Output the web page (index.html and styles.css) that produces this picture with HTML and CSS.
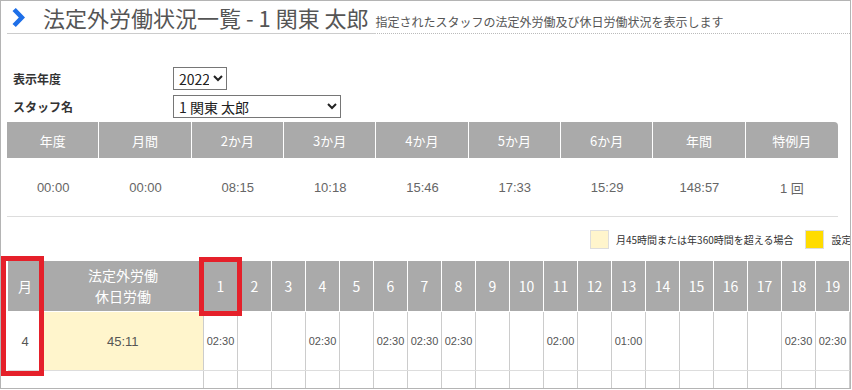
FILE: index.html
```html
<!DOCTYPE html>
<html lang="ja">
  <head>
    <meta charset="UTF-8" />
    <meta name="viewport" content="width=device-width, initial-scale=1.0" />
    <title>法定外労働状況一覧</title>
    <link rel="stylesheet" href="styles.css">
  </head>
  <body>
    <div class="frame">
      <div class="page-head">
        <h1 class="page-title">
          <svg class="chevron" width="13" height="19" viewBox="0 0 13 19" xmlns="http://www.w3.org/2000/svg">
            <polygon points="0.5,3 3.8,0 13,9.5 3.8,19 0.5,16 6.8,9.5" fill="#1e6fe8" />
          </svg>
          法定外労働状況一覧 - 1 関東 太郎
        </h1>
        <span class="page-desc">指定されたスタッフの法定外労働及び休日労働状況を表示します</span>
      </div>

      <div class="filters">
        <div class="filter-row">
          <label class="filter-label">表示年度</label>
          <select class="year-select">
            <option>2022</option>
            <option>2021</option>
          </select>
        </div>
        <div class="filter-row">
          <label class="filter-label">スタッフ名</label>
          <select class="staff-select">
            <option>1 関東 太郎</option>
          </select>
        </div>
      </div>

      <table class="summary">
        <thead>
          <tr>
            <th>年度</th>
            <th>月間</th>
            <th>2か月</th>
            <th>3か月</th>
            <th>4か月</th>
            <th>5か月</th>
            <th>6か月</th>
            <th>年間</th>
            <th>特例月</th>
          </tr>
        </thead>
        <tbody>
          <tr>
            <td>00:00</td>
            <td>00:00</td>
            <td>08:15</td>
            <td>10:18</td>
            <td>15:46</td>
            <td>17:33</td>
            <td>15:29</td>
            <td>148:57</td>
            <td>1 回</td>
          </tr>
        </tbody>
      </table>

      <div class="legend">
        <div class="legend-item">
          <span class="legend-box over"></span>
          <span>月45時間または年360時間を超える場合</span>
        </div>
        <div class="legend-item">
          <span class="legend-box limit"></span>
          <span>設定時間を超える場合</span>
        </div>
      </div>

      <table class="monthly">
        <thead>
          <tr id="day-head">
            <th class="head-month">月</th>
            <th class="head-total">法定外労働<br>休日労働</th>
          </tr>
        </thead>
        <tbody id="month-rows"></tbody>
      </table>

      <div class="mark mark-month"></div>
      <div class="mark mark-day"></div>
    </div>

    <script>
      const head = document.getElementById('day-head');
      const body = document.getElementById('month-rows');
      const rows = [
        {
          month: 4,
          total: '45:11',
          over: true,
          days: { 1: '02:30', 4: '02:30', 6: '02:30', 7: '02:30', 8: '02:30', 11: '02:00', 13: '01:00', 18: '02:30', 19: '02:30', 20: '02:30', 21: '02:30', 22: '02:30', 25: '03:00', 26: '02:30', 27: '02:41', 28: '02:30', 29: '03:30' }
        },
        {
          month: 5,
          total: '23:40',
          over: false,
          days: { 2: '02:30', 6: '02:00', 9: '01:30', 12: '02:30', 16: '02:30', 20: '02:30', 23: '03:40', 26: '02:30', 30: '03:30' }
        }
      ];
      // 日付ヘッダー
      for (let d = 1; d <= 31; d++) {
        const th = document.createElement('th');
        th.className = 'day';
        th.textContent = d;
        head.appendChild(th);
      }
      rows.forEach((row) => {
        const tr = document.createElement('tr');
        tr.innerHTML =
          '<td class="cell-month">' + row.month + '</td>' +
          '<td class="cell-total' + (row.over ? ' over' : '') + '">' + row.total + '</td>';
        for (let d = 1; d <= 31; d++) {
          const td = document.createElement('td');
          td.className = 'cell-day';
          td.textContent = row.days[d] || '';
          tr.appendChild(td);
        }
        body.appendChild(tr);
      });
    </script>
  </body>
</html>
```

FILE: styles.css
```css
body {
  margin: 0;
  font-family: "Noto Sans CJK JP", sans-serif;
  color: #333;
}
.frame {
  position: relative;
  width: 851px;
  height: 389px;
  box-sizing: border-box;
  border: 1px solid #b4b4b4;
  padding-left: 6px;
  overflow: hidden;
  background: #fff;
}

.page-head {
  display: flex;
  align-items: baseline;
  border-bottom: 1px dotted #bbb;
  white-space: nowrap;
}
.page-title {
  display: flex;
  align-items: center;
  gap: 18px;
  margin: 0 0 -1px;
  padding: 0 7px 0 5px;
  font-size: 22px;
  font-weight: normal;
  line-height: 32px;
  color: #555;
  border-bottom: 1px solid #ccc;
}
.chevron {
  flex: none;
}
.page-desc {
  font-size: 12px;
  color: #555;
}

.filters {
  margin-top: 33px;
  display: flex;
  flex-direction: column;
  gap: 5px;
}
.filter-row {
  display: flex;
  align-items: center;
  height: 23px;
}
.filter-label {
  width: 160px;
  padding-left: 6px;
  font-size: 12px;
  font-weight: bold;
  color: #333;
}
.year-select,
.staff-select {
  height: 23px;
  border: 1px solid #767676;
  border-radius: 0;
  background: #fff;
  font-family: "Noto Sans CJK JP", sans-serif;
  font-size: 14px;
  color: #222;
  padding: 0 1px;
}
.year-select {
  width: 54px;
}
.staff-select {
  width: 168px;
}

.summary {
  margin-top: 4px;
  width: 831px;
  table-layout: fixed;
  border-collapse: separate;
  border-spacing: 0;
}
.summary th {
  height: 36px;
  padding: 0;
  background: #aaa;
  color: #fff;
  font-size: 13px;
  font-weight: normal;
  border-right: 1px solid #fff;
}
.summary th:last-child {
  border-right: none;
  border-top-right-radius: 4px;
}
.summary td {
  height: 58px;
  padding: 0;
  text-align: center;
  font-family: "Liberation Sans", "Noto Sans CJK JP", sans-serif;
  font-size: 13px;
  color: #666;
  border-bottom: 1px solid #ddd;
}

.legend {
  display: flex;
  align-items: center;
  gap: 12px;
  margin-top: 13px;
  padding-left: 583px;
  white-space: nowrap;
  font-size: 10px;
  color: #333;
}
.legend-item {
  display: flex;
  align-items: center;
  gap: 7px;
}
.legend-box {
  width: 17px;
  height: 17px;
  border: 1px solid #ddd;
}
.legend-box.over {
  background: #fff5cc;
}
.legend-box.limit {
  background: #ffdc00;
}

.monthly {
  margin-top: 12px;
  width: 1250px;
  table-layout: fixed;
  border-collapse: collapse;
}
.monthly th {
  height: 50px;
  padding: 0;
  background: #aaa;
  color: #fff;
  font-size: 14px;
  font-weight: normal;
  line-height: 21px;
  border: 1px solid #fff;
  border-top: none;
}
.monthly .head-month {
  width: 34px;
}
.monthly .head-total {
  width: 160px;
}
.monthly th.day {
  width: 33px;
}
.monthly td {
  height: 58px;
  padding: 0;
  text-align: center;
  font-family: "Liberation Sans", sans-serif;
  color: #555;
  border-bottom: 1px solid #ddd;
}
.cell-month,
.cell-total {
  font-size: 13px;
}
.cell-total.over {
  background: #fff5cc;
}
.cell-day {
  font-size: 11px;
  border-left: 1px solid #ccc;
  border-right: 1px solid #ccc;
}

.mark {
  position: absolute;
  box-sizing: border-box;
  border: 5px solid #e5202a;
}
.mark-month {
  left: 0;
  top: 255px;
  width: 43px;
  height: 120px;
}
.mark-day {
  left: 198px;
  top: 256px;
  width: 43px;
  height: 59px;
}
```
